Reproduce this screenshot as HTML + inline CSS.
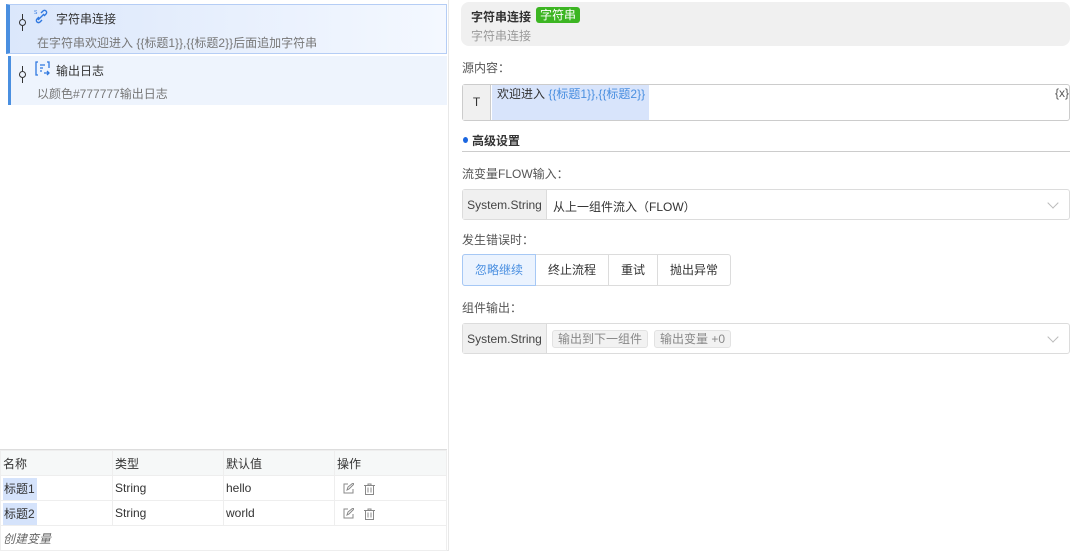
<!DOCTYPE html>
<html><head><meta charset="utf-8"><style>
*{margin:0;padding:0;box-sizing:border-box}
body{width:1073px;height:555px;background:#fff;font-family:"Liberation Sans","Noto Sans CJK SC",sans-serif;font-size:12px;color:#333;position:relative;overflow:hidden}
.a{position:absolute}
.node{position:absolute;left:6px;width:441px}
.t{position:absolute;font-size:12px;color:#333}
.sub{color:#777}
.lbl{position:absolute;left:462px;color:#555;font-size:12px}
.box{position:absolute;left:462px;width:608px;height:31px;border:1px solid #dcdcdc;border-radius:3px;background:#fff}
.pre{position:absolute;left:0;top:0;width:84px;height:29px;background:#f0f0f0;border-right:1px solid #dcdcdc;text-align:center;line-height:31px;color:#444}
.chev{position:absolute;right:12px;top:9px;width:8px;height:8px;border-right:1px solid #bbb;border-bottom:1px solid #bbb;transform:rotate(45deg)}
.tag{position:absolute;top:6px;height:18px;line-height:16px;border:1px solid #e2e2e2;background:#f2f2f2;border-radius:3px;padding:0 5px;color:#888}
table{border-collapse:collapse}
td{height:25px;border:1px solid #eee;padding-left:2px;font-size:12px;color:#333}
.ring{position:absolute;width:7px;height:7px;border:1px solid #333;border-radius:50%;background:transparent}
</style></head><body>
<div class="a" style="left:0;top:0;width:449px;height:551px;border-right:1px solid #e8e8e8;border-bottom:1px solid #e8e8e8"></div>
<div class="node" style="top:4px;height:50px;background:linear-gradient(90deg,#dbe7fb,#f4f8ff);border:1px solid #b5cdf5;border-left:4px solid #4a8fe0"></div>
<div class="a" style="left:22px;top:14px;width:1px;height:5px;background:#333"></div>
<div class="ring" style="left:19px;top:19px"></div>
<div class="a" style="left:22px;top:26px;width:1px;height:5px;background:#333"></div>
<svg class="a" style="left:34px;top:9px" width="15" height="15" viewBox="0 0 15 15"><text x="0" y="5" font-size="5" fill="#2f78e0" font-family="Liberation Sans">S</text><path d="M4 11l6-6M5 8l-2 2a2 2 0 0 0 3 3l2-2M10 7l2-2a2 2 0 0 0-3-3L7 4" stroke="#2f78e0" stroke-width="1.4" fill="none"/></svg>
<div class="t" style="left:56px;top:10px">字符串连接</div>
<div class="t sub" style="left:37px;top:34px">在字符串欢迎进入 {{标题1}},{{标题2}}后面追加字符串</div>
<div class="node" style="top:56px;height:49px;background:#eef4fd;border-left:3px solid #4a8fe0;left:8px;width:439px"></div>
<div class="a" style="left:22px;top:66px;width:1px;height:5px;background:#333"></div>
<div class="ring" style="left:19px;top:71px"></div>
<div class="a" style="left:22px;top:78px;width:1px;height:5px;background:#333"></div>
<svg class="a" style="left:35px;top:61px" width="15" height="15" viewBox="0 0 15 15"><path d="M3 1h-2v13h2M12 1h2v6M5 4h5M5 7h3M5 10h2M9 12h5M12 10l2 2-2 2" stroke="#2f78e0" stroke-width="1.3" fill="none"/></svg>
<div class="t" style="left:56px;top:62px">输出日志</div>
<div class="t sub" style="left:37px;top:85px">以颜色#777777输出日志</div>
<div class="a" style="left:0;top:449px;width:447px;height:1px;background:#ddd"></div>
<table class="a" style="left:0;top:450px;width:447px">
<tr style="background:#f6f8f8"><td style="width:112px">名称</td><td style="width:111px">类型</td><td style="width:111px">默认值</td><td>操作</td></tr>
<tr><td><span style="background:#d5e3fb;padding:4px 2px 4px 1px">标题1</span></td><td>String</td><td>hello</td><td><svg style="margin-left:6px;vertical-align:middle" width="11" height="11" viewBox="0 0 11 11"><path d="M5 1H1v9h9V6M4 7l1-3 5-4 1 1-5 5z" stroke="#888" fill="none"/></svg><svg style="margin-left:10px;vertical-align:middle" width="11" height="12" viewBox="0 0 11 12"><path d="M0 2.5h11M4 2.5V1h3v1.5M1.5 2.5v9h8v-9M4 4.5v5M7 4.5v5" stroke="#888" fill="none"/></svg></td></tr>
<tr><td><span style="background:#d5e3fb;padding:4px 2px 4px 1px">标题2</span></td><td>String</td><td>world</td><td><svg style="margin-left:6px;vertical-align:middle" width="11" height="11" viewBox="0 0 11 11"><path d="M5 1H1v9h9V6M4 7l1-3 5-4 1 1-5 5z" stroke="#888" fill="none"/></svg><svg style="margin-left:10px;vertical-align:middle" width="11" height="12" viewBox="0 0 11 12"><path d="M0 2.5h11M4 2.5V1h3v1.5M1.5 2.5v9h8v-9M4 4.5v5M7 4.5v5" stroke="#888" fill="none"/></svg></td></tr>
<tr><td colspan="4" style="font-style:italic;color:#666">创建变量</td></tr>
</table>
<div class="a" style="left:461px;top:2px;width:609px;height:44px;background:#f0f0f0;border-radius:8px"></div>
<div class="t" style="left:471px;top:8px;font-weight:bold">字符串连接</div>
<div class="a" style="left:536px;top:7px;height:16px;padding:0 4px;background:#3cb522;color:#fff;border-radius:3px;line-height:16px;font-size:12px">字符串</div>
<div class="t" style="left:471px;top:27px;color:#999">字符串连接</div>
<div class="lbl" style="top:59px">源内容：</div>
<div class="a" style="left:462px;top:84px;width:608px;height:37px;border:1px solid #ccc;border-radius:3px"></div>
<div class="a" style="left:463px;top:85px;width:28px;height:35px;background:#f0f0f0;border-right:1px solid #ccc;text-align:center;line-height:35px">T</div>
<div class="a" style="left:492px;top:85px;width:157px;height:35px;background:#d8e4fb"></div>
<div class="t" style="left:497px;top:85px">欢迎进入 <span style="color:#4a8fe0">{{标题1}},{{标题2}}</span></div>
<div class="t" style="left:1055px;top:86px;color:#555">{x}</div>
<div class="a" style="left:463px;top:137px;width:5px;height:6px;background:#1a66e0;border-radius:50%"></div>
<div class="t" style="left:472px;top:132px;font-weight:bold">高级设置</div>
<div class="a" style="left:462px;top:151px;width:608px;height:1px;background:#ccc"></div>
<div class="lbl" style="top:165px">流变量FLOW输入：</div>
<div class="box" style="top:189px"><div class="pre">System.String</div><div class="t" style="left:90px;top:8px">从上一组件流入（FLOW）</div><div class="chev"></div></div>
<div class="lbl" style="top:231px">发生错误时：</div>
<div class="a" style="left:462px;top:254px;width:269px;height:32px;border:1px solid #dcdcdc;border-radius:3px"></div>
<div class="a" style="left:462px;top:254px;width:74px;height:32px;background:#ebf3fe;border:1px solid #a6c8f5;border-radius:3px 0 0 3px;text-align:center;line-height:30px;color:#4a8fe0">忽略继续</div>
<div class="a" style="left:536px;top:255px;width:73px;height:30px;border-right:1px solid #dcdcdc;text-align:center;line-height:30px">终止流程</div>
<div class="a" style="left:609px;top:255px;width:49px;height:30px;border-right:1px solid #dcdcdc;text-align:center;line-height:30px">重试</div>
<div class="a" style="left:658px;top:255px;width:72px;height:30px;text-align:center;line-height:30px">抛出异常</div>
<div class="lbl" style="top:299px">组件输出：</div>
<div class="box" style="top:323px"><div class="pre">System.String</div><div class="tag" style="left:89px">输出到下一组件</div><div class="tag" style="left:191px">输出变量 +0</div><div class="chev"></div></div>
</body></html>
